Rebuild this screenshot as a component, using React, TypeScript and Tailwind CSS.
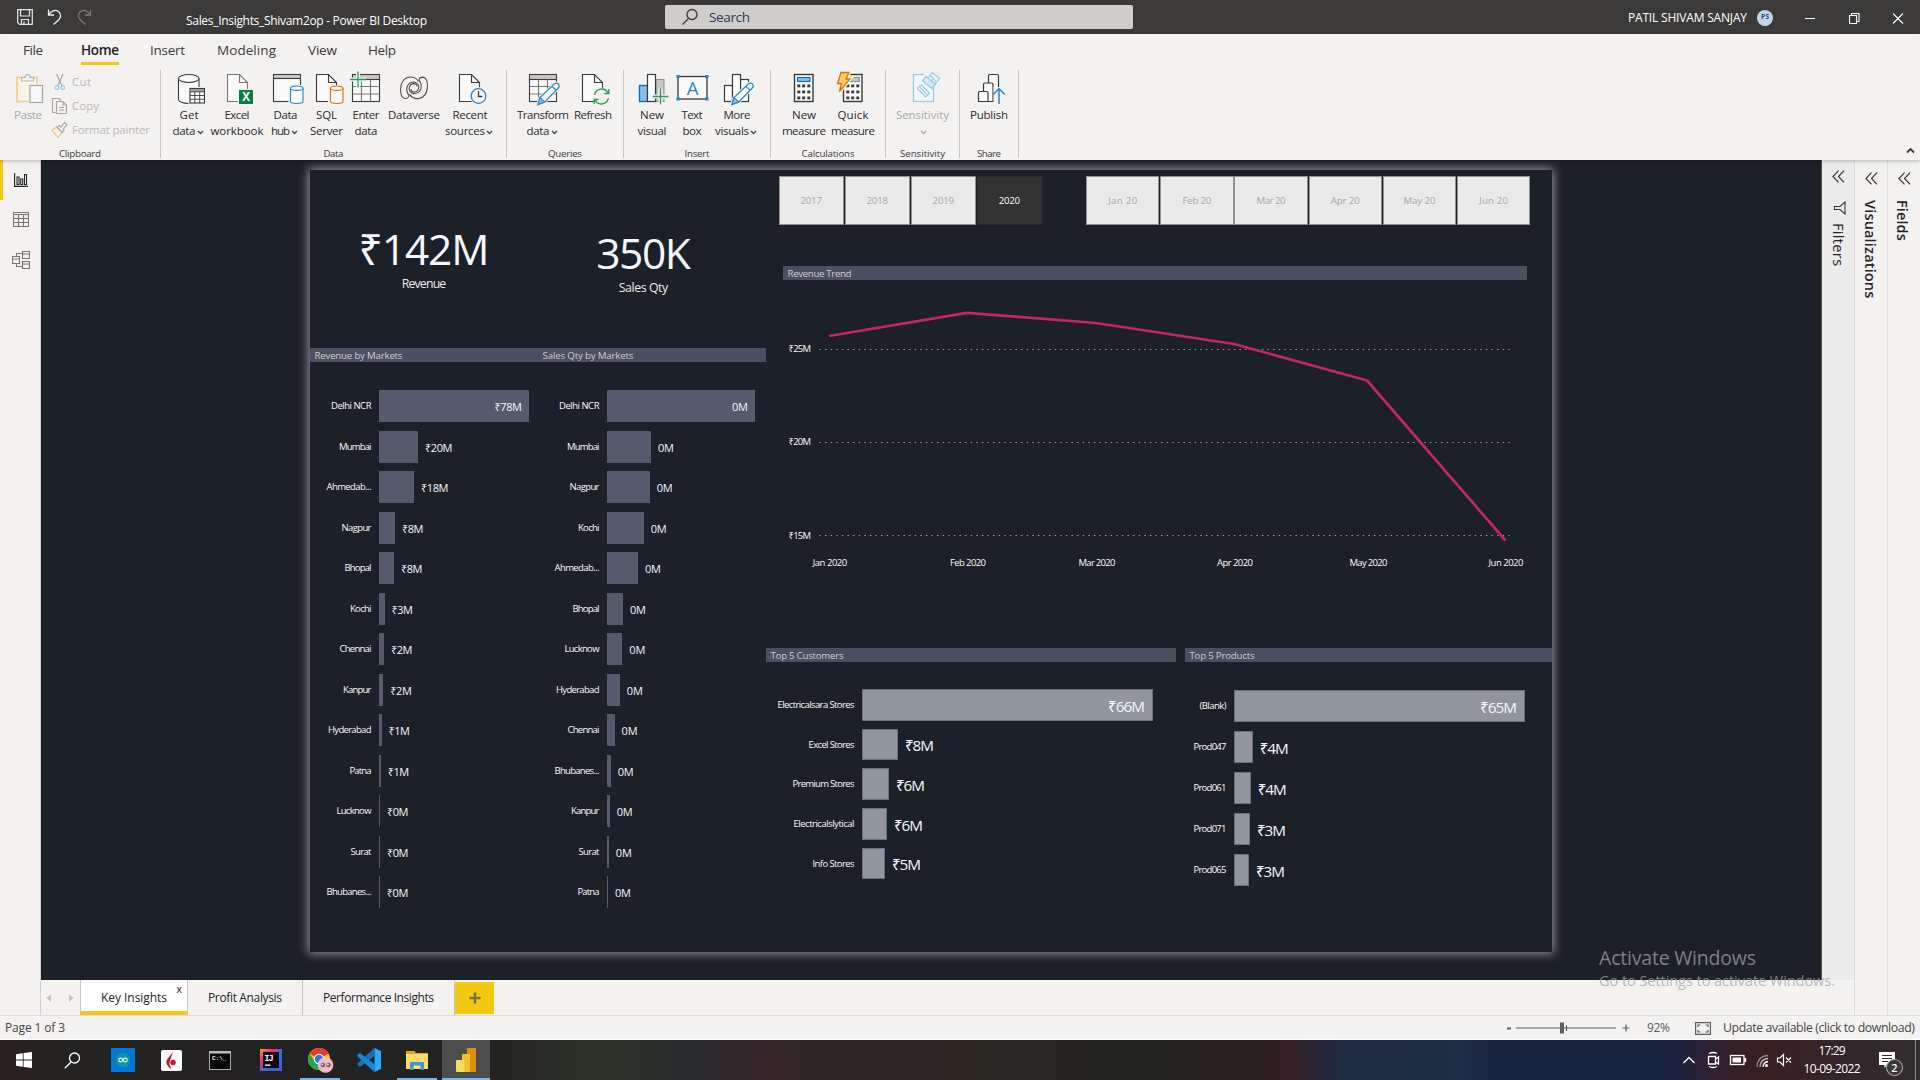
import React, { useLayoutEffect, useRef } from "react";

/** Single-line text whose tracking is adjusted so that it spans exactly `w` pixels. */
function T({ w, className = "", children }: { w: number; className?: string; children: string }) {
  const ref = useRef<HTMLSpanElement>(null);
  useLayoutEffect(() => {
    const el = ref.current;
    if (!el) return;
    el.style.letterSpacing = "0px";
    const range = document.createRange();
    range.selectNodeContents(el);
    const size = range.getBoundingClientRect().width;
    el.style.letterSpacing = `${(w - size) / Math.max(1, children.length - 1)}px`;
  }, [w, children]);
  return (
    <span ref={ref} className={`inline-block whitespace-nowrap leading-none shrink-0 ${className}`} style={{ width: w }}>
      {children}
    </span>
  );
}

/* ---------- ribbon icons ---------- */

const D = "#3b3a39";
const B = "#1e8bcd";

function Ico({ children, className = "" }: { children: React.ReactNode; className?: string }) {
  return (
    <svg width="32" height="32" viewBox="0 0 32 32" fill="none" className={`overflow-visible shrink-0 ${className}`} strokeWidth="1.1">
      {children}
    </svg>
  );
}
const Page = ({ c = D }: { c?: string }) => (
  <g stroke={c}>
    <path d="M5.5 1.5H17.5L25.5 9.5V28.5H5.5Z" fill="#fafafa" />
    <path d="M17.5 1.5V9.5H25.5" />
  </g>
);
const Grid = () => (
  <g stroke={D}>
    <rect x="2.5" y="1.5" width="27" height="27" fill="#fafafa" />
    <rect x="3" y="2" width="26" height="4" fill="#c8c6c4" stroke="none" />
    <path d="M2.5 6.5H29.5" />
    <path d="M2.5 13.5H29.5M2.5 21H29.5M11.5 6.5V28.5M20.5 6.5V28.5" stroke="#797775" />
  </g>
);
const Cyl = ({ x, y, w, h, c, r = 2.2 }: { x: number; y: number; w: number; h: number; c: string; r?: number }) => (
  <g stroke={c}>
    <path d={`M${x} ${y + r}V${y + h - r}A${w / 2} ${r} 0 0 0 ${x + w} ${y + h - r}V${y + r}`} fill="#fafafa" />
    <ellipse cx={x + w / 2} cy={y + r} rx={w / 2} ry={r} fill="#fafafa" />
  </g>
);
const Pencil = () => (
  <g>
    <path d="M11 31.5L13 24.5L27.5 10.8Q29.7 9.2 31.5 11Q33 13 31.3 15L17.8 29Z" fill="#fafafa" stroke="#f3f2f1" strokeWidth="3" />
    <path d="M11 31.5L13 24.5L27.5 10.8Q29.7 9.2 31.5 11Q33 13 31.3 15L17.8 29Z" fill="#fafafa" stroke="#2b88c8" strokeWidth="1.2" />
    <path d="M11 31.5L13 24.5L17.8 29Z" fill="#83beec" stroke="#2b88c8" />
    <path d="M25 13.5L29 17" stroke="#2b88c8" />
  </g>
);
const Plus = ({ x, y }: { x: number; y: number }) => (
  <g>
    <path d={`M${x - 8} ${y}H${x + 8}M${x} ${y - 8}V${y + 8}`} stroke="#f3f2f1" strokeWidth="4" />
    <path d={`M${x - 8} ${y}H${x + 8}M${x} ${y - 8}V${y + 8}`} stroke="#2f9b52" strokeWidth="1.3" />
  </g>
);
const Calc = () => (
  <g>
    <rect x="6.5" y="1.5" width="18.5" height="27" fill="#fafafa" stroke={D} strokeWidth="1.4" />
    <rect x="9.5" y="4.5" width="12.5" height="4" fill="#83beec" stroke="#1068b5" />
    {[11.5, 17.5, 23.5].map((y) => [9.3, 14.2, 19.3].map((x) => <rect key={`${x}-${y}`} x={x} y={y} width="3" height="2.8" fill={D} />))}
  </g>
);

const GetData = () => (
  <Ico>
    <Cyl x={5.5} y={1.5} w={20.5} h={29} c={D} r={4} />
    <rect x="15.5" y="14" width="16" height="17" fill="#f3f2f1" />
    <rect x="17" y="15.5" width="14.5" height="14.5" fill="#fff" stroke={D} />
    <path d="M17 18.7H31.5" stroke={D} />
    <path d="M17 22.5H31.5M17 26.3H31.5M21.8 18.5V30M26.7 18.5V30" stroke={D} strokeWidth=".9" />
    <rect x="17.5" y="16" width="13.5" height="2.2" fill="#a19f9d" />
  </Ico>
);
const Excel = () => (
  <Ico>
    <g transform="translate(1 0)">
      <Page c="#797775" />
    </g>
    <rect x="17" y="16" width="16" height="16" fill="#f3f2f1" />
    <rect x="18" y="17" width="14" height="14" fill="#107c41" />
    <text x="25" y="28.2" textAnchor="middle" fontSize="11.5" fontWeight="700" fill="#fff">X</text>
  </Ico>
);
const Hub = () => (
  <Ico>
    <rect x="3.5" y="1.5" width="27" height="27" fill="#fafafa" stroke={D} />
    <rect x="4" y="2" width="26" height="3" fill="#c8c6c4" />
    <path d="M3.5 5.5H30.5" stroke={D} />
    <rect x="18.5" y="12" width="16" height="20" fill="#f3f2f1" />
    <Cyl x={20.5} y={13} w={12.5} h={17.5} c="#1e8bcd" />
  </Ico>
);
const Sql = () => (
  <Ico>
    <Page />
    <rect x="17" y="12" width="17" height="20" fill="#f3f2f1" />
    <Cyl x={19.5} y={13} w={12.5} h={17.5} c="#e07000" />
  </Ico>
);
const Enter = () => (
  <Ico>
    <Grid />
    <Plus x={8} y={6.5} />
  </Ico>
);
const swirl = "M20.5 8.5Q17.5 3.5 11.5 4Q3 5.5 2.5 16Q2.5 25 7 25.5Q10.5 25.5 11 22.5Q8 18.5 9 14Q10.5 9.5 15.5 9Q20.5 9.5 20.8 14Q20.5 18.5 16.5 19Q13 19 13 16";
const Dataverse = () => (
  <Ico>
    <g stroke="#555350" strokeWidth="1.1">
      <path d={swirl} />
      <path d={swirl} transform="rotate(180 16 14.8)" />
    </g>
  </Ico>
);
const Recent = () => (
  <Ico>
    <Page />
    <circle cx="24.5" cy="23" r="9" fill="#f3f2f1" />
    <circle cx="24.5" cy="23" r="7.3" fill="#fafafa" stroke="#2b7fc0" strokeWidth="1.3" />
    <path d="M24.5 18V23.5H28.5" stroke={D} strokeWidth="1.3" />
  </Ico>
);
const Transform = () => (
  <Ico>
    <Grid />
    <Pencil />
  </Ico>
);
const Refresh = () => (
  <Ico>
    <Page />
    <circle cx="24.5" cy="23.5" r="9" fill="#f3f2f1" />
    <g stroke="#2f9b52" strokeWidth="1.4">
      <path d="M17.5 22A7.2 7.2 0 0 1 31 20M31.8 16V20.5H27.3" />
      <path d="M31.5 25A7.2 7.2 0 0 1 18 27M17.2 31V26.5H21.7" />
    </g>
  </Ico>
);
const NewVisual = () => (
  <Ico>
    <rect x="3.5" y="12.5" width="8" height="16" fill="#83beec" stroke="#1068b5" strokeWidth="1.3" />
    <rect x="20" y="6.5" width="8" height="22" fill="#c8c6c4" stroke="#979593" />
    <rect x="11.5" y="1.5" width="8" height="27" fill="#fff" stroke={D} strokeWidth="1.2" />
    <Plus x={24.5} y={23.5} />
  </Ico>
);
const TextBox = () => (
  <Ico>
    <rect x="2" y="3.5" width="29" height="22.5" fill="#fafafa" stroke={D} strokeWidth="1.3" />
    {[[0.5, 2], [29.3, 2], [0.5, 24.3], [29.3, 24.3]].map(([x, y]) => (
      <rect key={`${x}${y}`} x={x} y={y} width="3.2" height="3.2" fill={B} />
    ))}
    <text x="16.5" y="21.5" textAnchor="middle" fontSize="18.5" fill={B}>A</text>
  </Ico>
);
const More = () => (
  <Ico>
    <rect x="3.5" y="12.5" width="8" height="16" fill="#fff" stroke={D} strokeWidth="1.2" />
    <rect x="19.5" y="6.5" width="8" height="22" fill="#fff" stroke={D} strokeWidth="1.2" />
    <rect x="11.5" y="1.5" width="8" height="27" fill="#fff" stroke={D} strokeWidth="1.2" />
    <Pencil />
  </Ico>
);
const NewMeasure = () => (
  <Ico>
    <Calc />
  </Ico>
);
const bolt = "M4 -0.5H12L9 6H13L2.5 18.5L4.5 10.5H0.5Z";
const Quick = () => (
  <Ico>
    <Calc />
    <rect x="15" y="4.5" width="7" height="4" fill="#c8c6c4" stroke="#979593" />
    <path d={bolt} fill="#ffce69" stroke="#f3f2f1" strokeWidth="4" />
    <path d={bolt} fill="#ffce69" stroke="#e07000" strokeWidth="1.3" />
  </Ico>
);
const Sens = () => (
  <Ico>
    <g stroke="#9dcbe4" strokeWidth="1.3">
      <rect x="6.5" y="1.5" width="20" height="27" fill="#f6f8f9" />
      <rect x="17" y="0" width="12" height="13" fill="#f3f2f1" stroke="none" />
      <path d="M10 16L13.5 12L23 19.5L19.5 23.5Z" fill="#f6f8f9" transform="rotate(8 16 17)" />
      <path d="M12.5 14.5L21 21.5" transform="rotate(8 16 17)" />
      <path d="M15.5 8L19 3.5L28.5 11L25 15.5Z" fill="#d5e9f3" />
      <path d="M21 5L25.5 -0.3L32.5 5.5L28 11Z" fill="#f3f7fa" />
      <path d="M23.5 3L26.5 5.5L24.5 8M26.5 5.5L29 9.5" />
    </g>
  </Ico>
);
const Publish = () => (
  <Ico>
    <g stroke={D} strokeWidth="1.2" fill="#fafafa">
      <path d="M15.5 28.5V3Q15.5 1.5 17 1.5H24Q25.5 1.5 25.5 3V28.5Z" />
      <path d="M10.5 28.5V11.5Q10.5 10 12 10H18.5Q20 10 20 11.5V28.5Z" />
      <path d="M5.5 28.5V20Q5.5 18.5 7 18.5H13.5Q15 18.5 15 20V28.5Z" />
    </g>
    <rect x="20.6" y="14" width="11" height="18" fill="#f3f2f1" />
    <path d="M26 31V15.5M20.3 21.5L26 15.5L31.7 21.5" stroke={B} strokeWidth="1.5" />
  </Ico>
);

function Chev({ c = "#444" }: { c?: string }) {
  return (
    <svg width="7" height="5" viewBox="0 0 7 5" className="ml-[1px] mt-[2px] shrink-0" fill="none" stroke={c} strokeWidth="1.3">
      <path d="M1 1L3.5 3.5L6 1" />
    </svg>
  );
}

type Btn = { w: string; icon: React.ReactNode; a: [string, number]; b?: [string, number]; chev?: boolean; off?: boolean };

function RibbonButton({ w, icon, a, b, chev, off }: Btn) {
  return (
    <div className={`${w} shrink-0 flex flex-col items-center text-[11.5px] ${off ? "text-[#a8a6a4]" : "text-[#2b2a29]"}`}>
      {icon}
      <div className="h-4 mt-[2px] flex items-center">
        <T w={a[1]}>{a[0]}</T>
      </div>
      <div className={`h-4 flex items-center ${b && chev ? "-ml-[2px]" : ""}`}>
        {b && <T w={b[1]}>{b[0]}</T>}
        {chev && <Chev c={off ? "#a8a6a4" : "#444"} />}
      </div>
    </div>
  );
}

function GroupLabel({ w, children }: { w: number; children: string }) {
  return (
    <div className="h-[12px] flex items-center justify-center pt-[3px] text-[9.7px] text-[#3b3a39]">
      <T w={w}>{children}</T>
    </div>
  );
}

function Group({ w, label, pad, btns }: { w: string; label: [string, number]; pad: string; btns: Btn[] }) {
  return (
    <div className={`${w} shrink-0 h-[88px] border-r border-[#c8c6c4] flex flex-col`}>
      <div className={`flex h-[78px] pt-[3px] ${pad}`}>
        {btns.map((x) => (
          <RibbonButton key={x.a[0] + (x.b?.[0] ?? "")} {...x} />
        ))}
      </div>
      <GroupLabel w={label[1]}>{label[0]}</GroupLabel>
    </div>
  );
}

function Clipboard() {
  return (
    <div className="w-[161px] shrink-0 h-[88px] border-r border-[#c8c6c4] flex flex-col text-[11.5px] text-[#a8a6a4]">
      <div className="flex h-[78px]">
        <div className="w-[50px] pt-[3px] pl-[6px] flex flex-col items-center">
          <Ico className="ml-[3px]">
            <rect x="3" y="4.5" width="20" height="24" fill="#fdf6e8" stroke="#f3cf9c" strokeWidth="1.8" />
            <path d="M7.5 8V4.5H11Q11 1.5 13.5 1.5Q16 1.5 16 4.5H19.5V8Z" fill="#f3f2f1" stroke="#b8b6b4" />
            <rect x="16" y="12.5" width="12.5" height="17" fill="#f8f8f8" stroke="#f3f2f1" strokeWidth="3" />
            <rect x="16" y="12.5" width="12.5" height="17" fill="#f8f8f8" stroke="#a8a6a4" strokeWidth="1.2" />
          </Ico>
          <div className="h-4 mt-[2px] flex items-center">
            <T w={28}>Paste</T>
          </div>
        </div>
        <div className="flex flex-col text-[#bab8b6]">
          <div className="h-6 flex items-center">
            <svg width="16" height="18" viewBox="0 0 16 18" fill="none" strokeWidth="1.2">
              <path d="M6.5 1L12 13M13 1L7.5 13" stroke="#a8a6a4" />
              <circle cx="6.8" cy="14.5" r="1.9" stroke="#9dcbe4" />
              <circle cx="12.8" cy="14.5" r="1.9" stroke="#9dcbe4" />
            </svg>
            <T w={19} className="ml-[6px]">Cut</T>
          </div>
          <div className="h-6 flex items-center">
            <svg width="18" height="18" viewBox="0 0 18 18" fill="none" stroke="#a8a6a4" strokeWidth="1.1" className="-mr-[2px]">
              <path d="M6 15.5H2.5V1.5H9L11 3.5" />
              <path d="M6.5 4.5H13L16.5 8V16.5H6.5ZM13 4.5V8H16.5M9 10.5H14M9 13H14" />
            </svg>
            <T w={27} className="ml-[6px]">Copy</T>
          </div>
          <div className="h-6 flex items-center">
            <svg width="18" height="18" viewBox="0 0 18 18" fill="none" strokeWidth="1.2" className="-mr-[2px]">
              <path d="M2 9L7 6L12 11.5L8 16.5Z" fill="#fdf0dc" stroke="#e9bf92" />
              <path d="M7 6L9.5 4.5L11 6L14.5 1.5L17 3.5L13.5 8L14 9.5L12 11.5Z" stroke="#a8a6a4" fill="#f3f2f1" />
            </svg>
            <T w={78} className="ml-[6px]">Format painter</T>
          </div>
        </div>
      </div>
      <GroupLabel w={42}>Clipboard</GroupLabel>
    </div>
  );
}

function TitleBar() {
  return (
    <div className="h-[34px] bg-[#3b3a38] flex items-center text-white">
      <div className="w-[186px] flex items-center pl-[17px] gap-[14px] shrink-0">
        <svg width="16" height="16" viewBox="0 0 16 16" fill="none" stroke="#e6e6e6" strokeWidth="1.2">
          <path d="M.7.7H15.3V15.3H2.5L.7 13.5ZM3.5.7V7H12.5V.7M4.5 15V10.5H11.5V15M7 12.5V15" />
        </svg>
        <svg width="16" height="18" viewBox="0 0 16 18" fill="none" stroke="#f0f0f0" strokeWidth="1.3">
          <path d="M1.5 1.5V7H7M1.7 6.7C4 3 8 1 11.5 3.5C15 6.5 13.5 10 11.5 12L6.5 16.5" />
        </svg>
        <svg width="16" height="18" viewBox="0 0 16 18" fill="none" stroke="#787674" strokeWidth="1.3">
          <path d="M13.5 1.5V7H8M13.3 6.7C11 3 7 1 3.5 3.5C0 6.5 1.5 10 3.5 12L8.5 16.5" />
        </svg>
      </div>
      <T w={241} className="text-[12px] mt-[7px]">Sales_Insights_Shivam2op - Power BI Desktop</T>
      <div className="ml-[238px] w-[468px] h-6 -mt-[1px] shrink-0 rounded-[2px] bg-[#cfcdcb] flex items-center">
        <svg width="18" height="18" viewBox="0 0 18 18" fill="none" stroke="#3b3a39" strokeWidth="1.3" className="ml-4">
          <circle cx="11" cy="6.5" r="5" />
          <path d="M7.5 10.5L1.5 16.5" />
        </svg>
        <T w={41} className="ml-[10px] mt-[2px] text-[13.5px] text-[#2a3a55]">Search</T>
      </div>
      <T w={119} className="ml-[495px] mt-[2px] text-[12px]">PATIL SHIVAM SANJAY</T>
      <div className="ml-[10px] mt-[1px] size-4 shrink-0 rounded-full bg-[#c5d3ea] flex items-center justify-center text-[#26437c] font-bold">
        <T w={8} className="text-[6.5px]">PS</T>
      </div>
      <svg width="100" height="14" viewBox="0 0 100 14" fill="none" stroke="#fff" strokeWidth="1.1" className="ml-[32px] mt-[2px] shrink-0">
        <path d="M0 7.5H10M44.5 4.5H51.5V12.5H44.5ZM46.5 4.5V2.5H54V10.5H51.5M88 2.5L98 12.5M98 2.5L88 12.5" />
      </svg>
    </div>
  );
}

function Menu() {
  const items: [string, number, string][] = [
    ["File", 20, "ml-[23px]"],
    ["Home", 38, "ml-[38px]"],
    ["Insert", 35, "ml-[31px]"],
    ["Modeling", 59, "ml-[32px]"],
    ["View", 29, "ml-[32px]"],
    ["Help", 28, "ml-[31px]"],
  ];
  return (
    <div className="h-[36px] flex text-[13.5px] text-[#3b3a39]">
      {items.map(([t, w, m]) => (
        <div key={t} className={`${m} h-[31px] flex items-center ${t === "Home" ? "border-b-[3px] border-[#f2c811] pt-[5px] font-semibold text-[#252423]" : "pt-[2px]"}`}>
          <T w={w}>{t}</T>
        </div>
      ))}
    </div>
  );
}

function Ribbon() {
  return (
    <div className="relative z-10 h-[126px] bg-[#f3f2f1] shadow-[0_1px_4px_rgba(0,0,0,0.25)]">
      <Menu />
      <div className="flex h-[90px]">
        <Clipboard />
        <Group
          w="w-[346px]" label={["Data", 20]} pad="pl-[5px]"
          btns={[
            { w: "w-[46px]", icon: <GetData />, a: ["Get", 19], b: ["data", 23], chev: true },
            { w: "w-[50px]", icon: <Excel />, a: ["Excel", 25], b: ["workbook", 53] },
            { w: "w-[47px]", icon: <Hub />, a: ["Data", 24], b: ["hub", 19], chev: true },
            { w: "w-[35px]", icon: <Sql />, a: ["SQL", 21], b: ["Server", 33] },
            { w: "w-[44px]", icon: <Enter />, a: ["Enter", 27], b: ["data", 23] },
            { w: "w-[52px]", icon: <Dataverse />, a: ["Dataverse", 52] },
            { w: "w-[60px]", icon: <Recent />, a: ["Recent", 35], b: ["sources", 40], chev: true },
          ]}
        />
        <Group
          w="w-[117px]" label={["Queries", 34]} pad="pl-[7px]"
          btns={[
            { w: "w-[58px]", icon: <Transform />, a: ["Transform", 52], b: ["data", 23], chev: true },
            { w: "w-[42px]", icon: <Refresh />, a: ["Refresh", 38] },
          ]}
        />
        <Group
          w="w-[147px]" label={["Insert", 25]} pad="pl-[10px]"
          btns={[
            { w: "w-[36px]", icon: <NewVisual />, a: ["New", 24], b: ["visual", 29] },
            { w: "w-[44px]", icon: <TextBox />, a: ["Text", 21], b: ["box", 19] },
            { w: "w-[46px]", icon: <More />, a: ["More", 27], b: ["visuals", 34], chev: true },
          ]}
        />
        <Group
          w="w-[115px]" label={["Calculations", 53]} pad="pl-[8px]"
          btns={[
            { w: "w-[50px]", icon: <NewMeasure />, a: ["New", 24], b: ["measure", 44] },
            { w: "w-[48px]", icon: <Quick />, a: ["Quick", 31], b: ["measure", 44] },
          ]}
        />
        <Group w="w-[74px]" label={["Sensitivity", 45]} pad="" btns={[{ w: "w-[73px]", icon: <Sens />, a: ["Sensitivity", 53], chev: true, off: true }]} />
        <Group w="w-[59px]" label={["Share", 24]} pad="" btns={[{ w: "w-[58px]", icon: <Publish />, a: ["Publish", 38] }]} />
        <div className="flex-1 flex items-end justify-end pr-[5px] pb-[6px]">
          <svg width="9" height="7" viewBox="0 0 9 7" fill="none" stroke="#3b3a39" strokeWidth="1.8">
            <path d="M1 5.5L4.5 2L8 5.5" />
          </svg>
        </div>
      </div>
    </div>
  );
}

/* ---------- report ---------- */

function Card({ v, vw, label, lw, pad }: { v: string; vw: number; label: string; lw: number; pad: string }) {
  return (
    <div className={`flex flex-col items-center text-[#f3f7ff] ${pad}`}>
      <T w={vw} className="text-[42.5px]">{v}</T>
      <T w={lw} className="text-[12.3px] mt-[7px] text-[#ececec]">{label}</T>
    </div>
  );
}

type Row = [string, number, number, string, number];

function Bars({ rows, labelW, rowH, gap, tone, big }: { rows: Row[]; labelW: string; rowH: string; gap: string; tone: string; big?: boolean }) {
  const value = big ? "mt-[3px] text-[15.3px]" : "mt-[1px] text-[11px]";
  return (
    <div className={`flex flex-col ${gap}`}>
      {rows.map(([name, nw, bw, val, vw], i) => (
        <div key={name} className={`flex items-center ${rowH}`}>
          <div className={`${labelW} shrink-0 flex justify-end pr-[7.5px] text-[9.5px] text-[#fafafa]`}>
            <T w={nw}>{name}</T>
          </div>
          <div className={`h-full shrink-0 flex items-center justify-end ${tone}`} style={{ width: bw }}>
            {i === 0 && <T w={vw} className={`mr-[7px] text-[#f3f7ff] ${value}`}>{val}</T>}
          </div>
          {i > 0 && <T w={vw} className={`ml-[7px] text-[#f3f7ff] ${value}`}>{val}</T>}
        </div>
      ))}
    </div>
  );
}

const revenue: Row[] = [
  ["Delhi NCR", 40.5, 150, "₹78M", 27.5], ["Mumbai", 32.5, 39, "₹20M", 27.5], ["Ahmedab...", 45, 35, "₹18M", 27.5],
  ["Nagpur", 30, 16, "₹8M", 21.5], ["Bhopal", 27, 15, "₹8M", 21.5], ["Kochi", 21.5, 5.5, "₹3M", 21.5],
  ["Chennai", 32, 5, "₹2M", 21.5], ["Kanpur", 28.5, 4.3, "₹2M", 21.5], ["Hyderabad", 43.5, 2.5, "₹1M", 21.5],
  ["Patna", 22, 1.7, "₹1M", 21.5], ["Lucknow", 35, 1, "₹0M", 21.5], ["Surat", 21, 0.9, "₹0M", 21.5], ["Bhubanes...", 45, 0.8, "₹0M", 21.5],
];
const qty: Row[] = [
  ["Delhi NCR", 40.5, 148, "0M", 16], ["Mumbai", 32.5, 44, "0M", 16], ["Nagpur", 30, 42.7, "0M", 16],
  ["Kochi", 21.5, 36.7, "0M", 16], ["Ahmedab...", 45, 31, "0M", 16], ["Bhopal", 27, 16, "0M", 16],
  ["Lucknow", 35, 15.3, "0M", 16], ["Hyderabad", 43.5, 12.8, "0M", 16], ["Chennai", 32, 7.6, "0M", 16],
  ["Bhubanes...", 45, 3.7, "0M", 16], ["Kanpur", 28.5, 2.7, "0M", 16], ["Surat", 21, 1.8, "0M", 16], ["Patna", 22, 1, "0M", 16],
];
const customers: Row[] = [
  ["Electricalsara Stores", 77, 291, "₹66M", 37], ["Excel Stores", 46, 36, "₹8M", 29], ["Premium Stores", 62, 27, "₹6M", 29],
  ["Electricalslytical", 61, 25, "₹6M", 29], ["Info Stores", 42, 23, "₹5M", 29],
];
const products: Row[] = [
  ["(Blank)", 27, 291, "₹65M", 37], ["Prod047", 33, 18.7, "₹4M", 29], ["Prod061", 33, 16.7, "₹4M", 29],
  ["Prod071", 33, 16, "₹3M", 29], ["Prod065", 33, 15, "₹3M", 29],
];

function Bar({ children, className = "" }: { children: React.ReactNode; className?: string }) {
  return <div className={`h-[14px] bg-[#4b5060] flex items-center pt-[1.5px] text-[9.7px] text-[#cdcdcd] ${className}`}>{children}</div>;
}

function Slicer({ items, w, gap, tw, selected }: { items: string[]; w: string; gap: string; tw: number; selected?: string }) {
  return (
    <div className={`flex ${gap}`}>
      {items.map((t) => (
        <div key={t} className={`${w} h-[49px] flex items-center justify-center pt-[0.5px] text-[9.7px] border ${t === selected ? "bg-[#333333] border-[#2b2b2d] text-white" : "bg-[#eaeaea] border-[#8f9194] text-[#a6a6a6]"}`}>
          <T w={t.startsWith("May") ? tw + 3 : tw}>{t}</T>
        </div>
      ))}
    </div>
  );
}

function Trend() {
  const pts = "829,336 967,312.8 1096,323 1234,344 1367,380.5 1505.5,540.5";
  const ys: [string, string][] = [["₹25M", "h-[93px]"], ["₹20M", "h-[94px]"], ["₹15M", "h-[18px]"]];
  const months: [string, number][] = [["Jan 2020", 34.5], ["Feb 2020", 36], ["Mar 2020", 37], ["Apr 2020", 36], ["May 2020", 38], ["Jun 2020", 35]];
  const cols = ["w-[138px]", "w-[129px]", "w-[138px]", "w-[133.5px]", "w-[137.5px]", "w-[36px]"];
  return (
    <div className="text-[9.5px] text-[#fafafa]">
      <div className="flex h-[274px]">
        <div className="w-[36px] pl-[5.5px] pt-[60px] flex flex-col">
          {ys.map(([t, h]) => (
            <div key={t} className={h}>
              <div className="h-[18px] flex items-center">
                <T w={22.5}>{t}</T>
              </div>
            </div>
          ))}
        </div>
        <svg width="708" height="274" viewBox="819 280 708 274" fill="none">
          {[349.5, 442.5, 535.5].map((y) => (
            <path key={y} d={`M819.5 ${y}H1513`} stroke="#a0a2a5" strokeWidth="1.1" strokeDasharray="1.4 4.2" />
          ))}
          <polyline points={pts} stroke="#c4275f" strokeWidth="2.7" strokeLinejoin="round" />
        </svg>
      </div>
      <div className="flex pl-[29px] h-[18px]">
        {months.map(([m, w], i) => (
          <div key={m} className={`${cols[i]} shrink-0`}>
            <div className="w-[36px] h-[18px] flex items-center justify-center">
              <T w={w}>{m}</T>
            </div>
          </div>
        ))}
      </div>
    </div>
  );
}

function Report() {
  return (
    <div className="w-[1242px] h-[782px] shrink-0 bg-[#1c2028] flex shadow-[0_0_10px_1px_#a0a1a4]">
      <div className="w-[456px] shrink-0 flex flex-col">
        <div className="h-[178px] flex">
          <Card v="₹142M" vw={131} label="Revenue" lw={44.5} pad="w-[228px] pt-[58px]" />
          <Card v="350K" vw={94.5} label="Sales Qty" lw={49.5} pad="w-[211px] pt-[62px]" />
        </div>
        <Bar>
          <T w={88} className="ml-[4.5px]">Revenue by Markets</T>
          <T w={91} className="ml-[140px]">Sales Qty by Markets</T>
        </Bar>
        <div className="flex pt-[28px]">
          <div className="w-[228px]">
            <Bars rows={revenue} labelW="w-[69px]" rowH="h-8" gap="gap-[8.5px]" tone="bg-[#565b6b]" />
          </div>
          <Bars rows={qty} labelW="w-[69px]" rowH="h-8" gap="gap-[8.5px]" tone="bg-[#565b6b]" />
        </div>
      </div>
      <div className="w-[786px] flex flex-col">
        <div className="flex h-[96px] pl-[12.5px] pt-[6px]">
          <Slicer items={["2017", "2018", "2019", "2020"]} w="w-[65.4px]" gap="gap-[0.7px]" tw={21.5} selected="2020" />
          <div className="w-[43.9px]" />
          <Slicer items={["Jan 20", "Feb 20", "Mar 20", "Apr 20", "May 20", "Jun 20"]} w="w-[73.4px]" gap="gap-[0.8px]" tw={29} />
        </div>
        <div className="ml-[17px] w-[744px]">
          <Bar>
            <T w={64} className="ml-[4.5px]">Revenue Trend</T>
          </Bar>
          <Trend />
        </div>
        <div className="flex mt-[76px]">
          <div className="w-[419px] shrink-0">
            <Bar className="w-[410.4px]">
              <T w={73} className="ml-[4.5px]">Top 5 Customers</T>
            </Bar>
            <div className="pt-[27px]">
              <Bars rows={customers} labelW="w-[96px]" rowH="h-[31.5px]" gap="gap-[8.2px]" tone="bg-[#9195a0] border border-[#6b6f7a]" big />
            </div>
          </div>
          <div className="w-[367px]">
            <Bar>
              <T w={65} className="ml-[4.5px]">Top 5 Products</T>
            </Bar>
            <div className="pt-[28px]">
              <Bars rows={products} labelW="w-[49px]" rowH="h-8" gap="gap-[9px]" tone="bg-[#9195a0] border border-[#6b6f7a]" big />
            </div>
          </div>
        </div>
      </div>
    </div>
  );
}

function LeftRail() {
  return (
    <div className="w-[41px] shrink-0 bg-[#f3f2f1] border-r border-[#d2d0ce] flex flex-col">
      <div className="h-10 border-l-[3px] border-[#f2c811] flex items-center pl-[11px]">
        <svg width="14" height="14" viewBox="0 0 14 14" fill="none" stroke="#252423" strokeWidth="1.1">
          <path d="M.6 0V13.4H14M3 4H5V11.5H3ZM6.7 6H8.7V11.5H6.7ZM10.5 1.5H12.5V11.5H10.5Z" />
        </svg>
      </div>
      <div className="h-10 flex items-center pl-[13px] pb-[1px]">
        <svg width="16" height="15" viewBox="0 0 16 15" fill="none" stroke="#797775" strokeWidth="1.1">
          <path d="M.5.5H15.5V14.5H.5ZM.5 2.5H15.5M.5 6.5H15.5M.5 10.5H15.5M5.5 2.5V14.5M10.5 2.5V14.5" />
        </svg>
      </div>
      <div className="h-10 flex items-center pl-[12px]">
        <svg width="18" height="18" viewBox="0 0 18 18" fill="none" stroke="#797775" strokeWidth="1.1">
          <path d="M.5 5.5H7.5V12.5H.5ZM.5 8H7.5M10.5.5H17.5V7.5H10.5ZM10.5 3H17.5M10.5 10.5H17.5V17.5H10.5ZM10.5 13H17.5M4.5 5.5V2.5H10.5M4.5 12.5V15.5H10.5" />
        </svg>
      </div>
    </div>
  );
}

function Guillemet() {
  return (
    <svg width="13" height="13" viewBox="0 0 13 13" fill="none" stroke="#3b3a39" strokeWidth="1.2" className="shrink-0">
      <path d="M6.5.7L1 6.5L6.5 12.3M12 .7L6.5 6.5L12 12.3" />
    </svg>
  );
}

const VText = ({ children, className }: { children: string; className: string }) => (
  <div className={`[writing-mode:vertical-rl] whitespace-nowrap leading-none text-[14.5px] text-[#252423] ${className}`}>{children}</div>
);

function Side() {
  return (
    <div className="flex h-[855px] text-[#252423]">
      <div className="w-[33px] flex flex-col">
        <div className="h-[820px] bg-[#ebebeb] border-l border-[#555] flex flex-col items-center pt-[10px]">
          <Guillemet />
          <svg width="13" height="14" viewBox="0 0 13 14" fill="none" stroke="#3b3a39" strokeWidth="1.1" className="mt-[18px] ml-[3px] shrink-0">
            <path d="M12 1V13L7 8.5H1.5V5.5H7Z" />
          </svg>
          <VText className="mt-[8px] -ml-[1px] tracking-[0.35px]">Filters</VText>
        </div>
      </div>
      <div className="w-[33px] border-l border-[#dedcda] flex flex-col items-center pt-[12px]">
        <Guillemet />
        <VText className="mt-[15px] -ml-[3px] tracking-[0.17px] font-semibold">Visualizations</VText>
      </div>
      <div className="w-[33px] border-l border-[#dedcda] flex flex-col items-center pt-[12px]">
        <Guillemet />
        <VText className="mt-[15px] -ml-[4px] tracking-[0.1px] font-semibold">Fields</VText>
      </div>
    </div>
  );
}

function PageTabs() {
  return (
    <div className="flex h-[35px] text-[12px] text-[#252423]">
      <svg width="39" height="35" viewBox="0 0 39 35" className="shrink-0" fill="#c8c6c4">
        <path d="M10 14V22L5.5 18ZM28 14V22L32.5 18Z" />
      </svg>
      <div className="relative w-[108px] bg-white border-x border-[#c8c6c4] border-b-4 border-b-[#f2c811] flex items-center pt-[5px] justify-center">
        <T w={66}>Key Insights</T>
        <span className="absolute right-[5px] top-[3px] text-[11px] leading-[12px]">x</span>
      </div>
      <div className="w-[115px] border-r border-[#c8c6c4] flex items-center justify-center pt-[1px]">
        <T w={74}>Profit Analysis</T>
      </div>
      <div className="w-[152px] border-r border-[#c8c6c4] flex items-center justify-center pt-[1px]">
        <T w={111}>Performance Insights</T>
      </div>
      <div className="w-[39px] h-8 mt-[2px] bg-[#f2c811] flex items-center justify-center">
        <svg width="12" height="12" viewBox="0 0 12 12" stroke="#7a705a" strokeWidth="2.5">
          <path d="M6 .5V11.5M.5 6H11.5" />
        </svg>
      </div>
    </div>
  );
}

function Status() {
  return (
    <div className="h-[25px] bg-[#f3f2f1] border-t border-[#dedcda] border-b border-b-white flex items-center text-[12px] text-[#484644]">
      <T w={60} className="ml-[5px] mt-[1px]">Page 1 of 3</T>
      <svg width="124" height="14" viewBox="0 0 124 14" fill="none" stroke="#605e5c" strokeWidth="1.2" className="ml-[1442px] shrink-0">
        <path d="M0 7.5H4" strokeWidth="2" />
        <path d="M9 7H109M59.5 4.5V10M115.5 7H122.5M119 3.5V10.5" />
        <rect x="53" y="1.5" width="4" height="11" fill="#605e5c" stroke="none" />
      </svg>
      <T w={23} className="ml-[16px] mt-[1px] text-[#605e5c]">92%</T>
      <svg width="16" height="13" viewBox="0 0 16 13" fill="none" stroke="#605e5c" strokeWidth="1.2" className="ml-[25px] mt-[2px] shrink-0">
        <path d="M.6.6H15.4V12.4H.6ZM3 5V3H5.5M10.5 3H13V5M13 8V10H10.5M5.5 10H3V8" />
      </svg>
      <T w={192} className="ml-[12px] mt-[1px] text-[12.3px]">Update available (click to download)</T>
    </div>
  );
}

/* ---------- taskbar ---------- */

function TaskCell({ w, children, open, active }: { w: string; children: React.ReactNode; open?: boolean; active?: boolean }) {
  return (
    <div className={`${w} shrink-0 h-10 flex flex-col items-center ${active ? "bg-[#4d4d4c]" : ""}`}>
      <div className="h-[38px] flex items-center pt-[2px]">{children}</div>
      {open && <div className={`h-[2px] bg-[#76b9ed] ${active ? "w-full" : "w-10"}`} />}
    </div>
  );
}

function Taskbar() {
  return (
    <div className="h-10 flex bg-[linear-gradient(90deg,#2a1f1f_0px,#242221_60px,#222222_480px,#2e3228_600px,#262a2c_690px,#35252a_750px,#2f2424_840px,#2c2723_980px,#222321_1140px,#281f1f_1240px,#331f24_1290px,#1f2a40_1340px,#1d2d45_1460px,#18213e_1510px,#192340_1670px,#2e2030_1710px,#381f20_1760px,#33262a_1840px,#332e30_1920px)]">
      <TaskCell w="w-12">
        <svg width="16" height="16" viewBox="0 0 16 16" fill="#fff">
          <path d="M0 2.2L6.8 1.2V7.6H0ZM7.6 1.1L16 0V7.6H7.6ZM0 8.4H6.8V14.8L0 13.8ZM7.6 8.4H16V16L7.6 14.9Z" />
        </svg>
      </TaskCell>
      <TaskCell w="w-12">
        <svg width="17" height="17" viewBox="0 0 17 17" fill="none" stroke="#fff" strokeWidth="1.3">
          <circle cx="10.5" cy="6" r="5" />
          <path d="M7 10L.8 16.2" />
        </svg>
      </TaskCell>
      <TaskCell w="w-[54px]">
        <svg width="24" height="24" viewBox="0 0 24 24" fill="none">
          <rect width="24" height="24" fill="#0078d7" />
          <circle cx="12" cy="12" r="7.3" fill="#12959c" />
          <circle cx="9.7" cy="12" r="1.9" stroke="#e8f6f6" strokeWidth="1.1" />
          <circle cx="14.3" cy="12" r="1.9" stroke="#e8f6f6" strokeWidth="1.1" />
        </svg>
      </TaskCell>
      <TaskCell w="w-[43px]">
        <svg width="21" height="21" viewBox="0 0 21 21" fill="none">
          <rect width="21" height="21" rx="2" fill="#fafafa" />
          <path d="M12 2L6 9.5Q4 13.5 9 18.5H10.5Q7.5 14.5 9 10.5Z" fill="#c8102e" />
          <circle cx="12" cy="12.5" r="2.7" fill="#d0112b" />
        </svg>
      </TaskCell>
      <TaskCell w="w-[54px]">
        <svg width="22" height="19" viewBox="0 0 22 19" fill="none">
          <rect x=".5" y=".5" width="21" height="18" fill="#080808" stroke="#a8adb2" />
          <rect x="0" y="0" width="22" height="2.5" fill="#b8bec6" />
          <text x="3" y="9" fontSize="6" fontWeight="700" fill="#f0f0f0" fontFamily="Liberation Mono">C:\_</text>
        </svg>
      </TaskCell>
      <TaskCell w="w-[47px]">
        <svg width="22" height="22" viewBox="0 0 22 22" fill="none">
          <defs>
            <linearGradient id="ij" x1="0" y1="0" x2="1" y2="1">
              <stop offset="0" stopColor="#f9a12a" />
              <stop offset=".3" stopColor="#ee2d6e" />
              <stop offset=".6" stopColor="#1c74e8" />
              <stop offset="1" stopColor="#5a4fd8" />
            </linearGradient>
          </defs>
          <rect width="22" height="22" fill="url(#ij)" />
          <rect x="3" y="3" width="16" height="16" fill="#120714" />
          <text x="4.5" y="12" fontSize="8.5" fontWeight="700" fill="#fff" fontFamily="Liberation Mono" textLength="9">IJ</text>
          <rect x="5" y="15.5" width="5.5" height="1.3" fill="#fff" />
        </svg>
      </TaskCell>
      <TaskCell w="w-[52px]" open>
        <svg width="26" height="25" viewBox="0 0 26 25" fill="none" className="ml-[1px]">
          <circle cx="11" cy="11" r="11" fill="#fbc116" />
          <path d="M11 11L1.5 5.5A11 11 0 0 1 20.5 5.5Z" fill="#e33b2e" />
          <path d="M11 0A11 11 0 0 1 20.5 5.5H11Z" fill="#e33b2e" />
          <path d="M11 22A11 11 0 0 1 1.5 5.5L7 14L15.5 14.5Z" fill="#2ba24c" />
          <circle cx="11" cy="11" r="5.2" fill="#fff" />
          <circle cx="11" cy="11" r="4.2" fill="#2f78ea" />
          <circle cx="17.5" cy="17" r="7.8" fill="#f5b6c8" />
          <ellipse cx="14.8" cy="17" rx="2.3" ry="2.3" fill="#6b6362" />
          <ellipse cx="20.5" cy="17" rx="2.3" ry="2.3" fill="#6b6362" />
          <circle cx="14.2" cy="16.5" r=".9" fill="#e8e8e8" />
          <circle cx="19.9" cy="16.5" r=".9" fill="#e8e8e8" />
        </svg>
      </TaskCell>
      <TaskCell w="w-[45px]">
        <svg width="24" height="24" viewBox="0 0 24 24" fill="none">
          <path d="M17.5 0L24 3V21L17.5 24Z" fill="#2aa8f2" />
          <path d="M17.5 0L1 15L0 16.5L3 19L18 7.5Z" fill="#1173c0" />
          <path d="M17.5 24L1 9L0 7.5L3 5L18 16.5Z" fill="#1887d6" />
        </svg>
      </TaskCell>
      <TaskCell w="w-[51px]" open>
        <svg width="22" height="19" viewBox="0 0 22 19" fill="none">
          <path d="M0 0H8.5L10 2H22V18H0Z" fill="#e2a516" />
          <rect y="3" width="22" height="15" fill="#fddb71" />
          <path d="M4 19V11H18V19H14.5V14.5H7.5V19Z" fill="#3c96dc" />
        </svg>
      </TaskCell>
      <TaskCell w="w-[48px]" open active>
        <svg width="20" height="24" viewBox="0 0 20 24" fill="none" className="-ml-[1px]">
          <rect x="11" y="0" width="9" height="24" rx="1" fill="#d9920c" />
          <rect x="6" y="6" width="8" height="18" rx="1" fill="#efc12f" />
          <rect x="0" y="12" width="8.5" height="12" rx="1" fill="#f8dc62" />
        </svg>
      </TaskCell>
      <div className="flex-1" />
      <svg width="112" height="40" viewBox="1682 0 112 40" fill="none" stroke="#fff" strokeWidth="1.3" className="shrink-0">
        <path d="M1683.5 23L1689 17.5L1694.5 23" />
        <path d="M1708.5 16.5H1715.5V24H1708.5ZM1715.5 19L1718.5 17V24L1715.5 22M1709 13.5Q1713 11.5 1717 13.5M1709 26.5Q1713 28.5 1717 26.5" />
        <rect x="1730.5" y="15.5" width="13.5" height="9" />
        <rect x="1732.5" y="17.5" width="8.5" height="5" fill="#fff" stroke="none" />
        <path d="M1745.3 18V22" strokeWidth="1.8" />
        <path d="M1757 27Q1757.5 16 1768 15.5" stroke="#8a8588" />
        <path d="M1760 27Q1760.5 19 1768 18.5" stroke="#b5b0b3" />
        <path d="M1763 27Q1763.5 22 1768 21.5" />
        <circle cx="1766.5" cy="25.5" r="1.5" fill="#fff" stroke="none" />
        <path d="M1777.5 18H1780L1783.5 14.5V25.5L1780 22H1777.5ZM1786 17.5L1791 22.5M1791 17.5L1786 22.5" strokeWidth="1.2" />
      </svg>
      <div className="w-[76px] shrink-0 flex flex-col items-center text-white text-[12px] pt-[5px] gap-[6px]">
        <T w={27}>17:29</T>
        <T w={57}>10-09-2022</T>
      </div>
      <svg width="50" height="40" viewBox="1870 0 50 40" fill="none" className="shrink-0">
        <path d="M1879 12H1895V25H1887L1884.5 28V25H1879Z" fill="#fff" />
        <path d="M1882 15.5H1892M1882 18.5H1892M1882 21.5H1888" stroke="#33292c" strokeWidth="1.1" />
        <circle cx="1894.5" cy="27.5" r="8" fill="#3b3638" stroke="#a5a2a3" strokeWidth="1.1" />
        <text x="1894.5" y="31.5" textAnchor="middle" fill="#fff" fontSize="11" fontWeight="600">2</text>
        <path d="M1915.5 0V40" stroke="#8a8587" />
      </svg>
    </div>
  );
}

export default function App() {
  return (
    <div className="relative w-[1920px] h-[1080px] overflow-hidden bg-[#f3f2f1] flex flex-col [font-family:'Open_Sans','Noto_Sans',sans-serif]">
      <TitleBar />
      <Ribbon />
      <div className="flex h-[855px]">
        <LeftRail />
        <div className="w-[1780px] flex flex-col">
          <div className="h-[820px] bg-[#1c2028] pl-[269px] pt-[10px] overflow-hidden">
            <Report />
          </div>
          <PageTabs />
        </div>
        <Side />
      </div>
      <Status />
      <Taskbar />
      <div className="absolute left-[1599px] top-[948px] flex flex-col text-[#a0a2a4]/75">
        <T w={157} className="text-[19.5px]">Activate Windows</T>
        <T w={236} className="text-[14.5px] mt-[6px]">Go to Settings to activate Windows.</T>
      </div>
    </div>
  );
}
